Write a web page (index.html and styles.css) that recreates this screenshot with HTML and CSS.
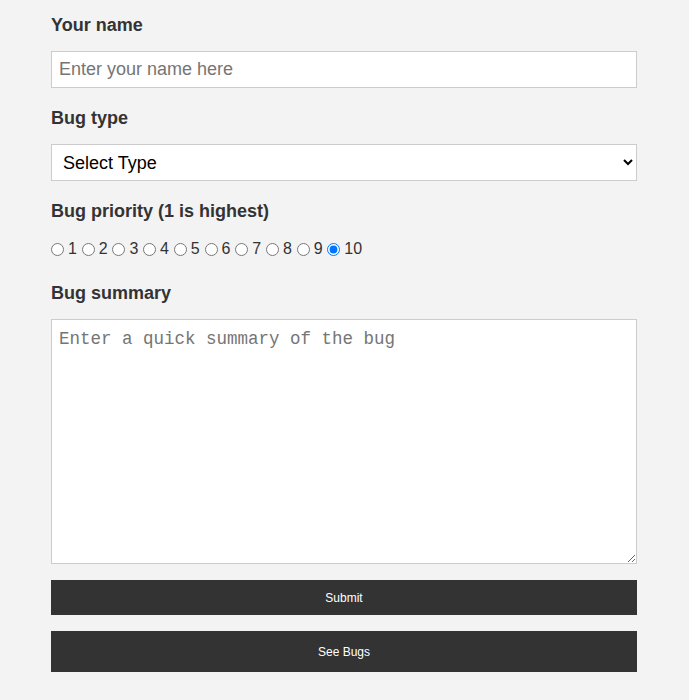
FILE: index.html
```html
<!DOCTYPE html>
<html lang="en">
<head>
<meta charset="utf-8">
<title>Bug Tracker</title>
<link rel="stylesheet" href="styles.css">
</head>
<body>
<form class="form">
  <label class="label" for="name">Your name</label>
  <input class="field" id="name" type="text" placeholder="Enter your name here">

  <label class="label" for="type">Bug type</label>
  <select class="field select" id="type">
    <option>Select Type</option>
  </select>

  <label class="label">Bug priority (1 is highest)</label>
  <div class="radios">
    <label class="radio"><input type="radio" name="p">1</label>
    <label class="radio"><input type="radio" name="p">2</label>
    <label class="radio"><input type="radio" name="p">3</label>
    <label class="radio"><input type="radio" name="p">4</label>
    <label class="radio"><input type="radio" name="p">5</label>
    <label class="radio"><input type="radio" name="p">6</label>
    <label class="radio"><input type="radio" name="p">7</label>
    <label class="radio"><input type="radio" name="p">8</label>
    <label class="radio"><input type="radio" name="p">9</label>
    <label class="radio"><input type="radio" name="p" checked>10</label>
  </div>

  <label class="label" for="summary">Bug summary</label>
  <textarea class="summary" id="summary" placeholder="Enter a quick summary of the bug"></textarea>

  <button class="btn btn-submit" type="button">Submit</button>
  <button class="btn btn-see" type="button">See Bugs</button>
</form>
</body>
</html>
```
FILE: styles.css
```css
html, body {
  margin: 0;
  padding: 0;
  background: #f3f3f3;
}
body {
  font-family: "Liberation Sans", Arial, sans-serif;
  color: #333;
  padding: 0 52px 0 51px;
}
.form {
  padding: 15px 0 28px;
  display: flex;
  flex-direction: column;
}
.label {
  display: block;
  font-size: 18px;
  font-weight: bold;
  line-height: 21px;
  margin: 0 0 15px;
  color: #333;
}
.field {
  box-sizing: border-box;
  width: 100%;
  height: 37px;
  border: 1px solid #ccc;
  border-radius: 0;
  background: #fff;
  font-family: "Liberation Sans", Arial, sans-serif;
  font-size: 18px;
  padding: 0 7px;
  margin: 0 0 20px;
  color: #000;
  outline: none;
}
.field::placeholder {
  color: #757575;
}
.select {
  padding-left: 7px;
}
.radios {
  display: flex;
  align-items: center;
  height: 24px;
  margin-bottom: 22px;
  font-size: 16px;
  color: #333;
}
.radio {
  display: inline-flex;
  align-items: center;
  margin-right: 4.8px;
}
.radio input {
  width: 13px;
  height: 13px;
  margin: 0 4px 0 0;
}
.summary {
  display: block;
  box-sizing: border-box;
  width: 100%;
  height: 245px;
  border: 1px solid #ccc;
  border-radius: 0;
  background: #fff;
  padding: 9px 7px 7px;
  font-family: "Liberation Mono", "DejaVu Sans Mono", monospace;
  font-size: 17.5px;
  line-height: 20px;
  margin: 0 0 16px;
  outline: none;
}
.summary::placeholder {
  color: #757575;
}
.btn {
  display: block;
  width: 100%;
  border: none;
  background: #333;
  color: #fff;
  font-family: "Liberation Sans", Arial, sans-serif;
  font-size: 12px;
  padding: 0;
  margin: 0;
  cursor: pointer;
}
.btn-submit {
  height: 35px;
  margin-bottom: 16px;
}
.btn-see {
  height: 41px;
}
```
